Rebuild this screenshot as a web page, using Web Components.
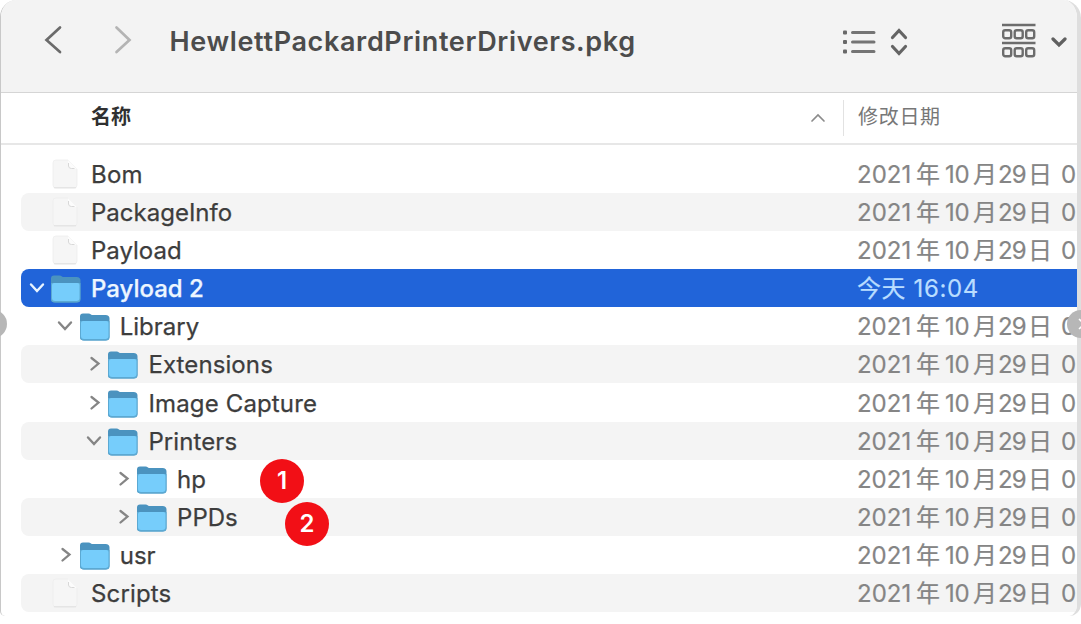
<!DOCTYPE html>
<html lang="zh-CN"><head><meta charset="utf-8"><title>HewlettPackardPrinterDrivers.pkg</title>
<style>html,body{margin:0;width:1081px;height:624px;overflow:hidden;background:#fff}</style></head>
<body><finder-window></finder-window>
<script>
const define=(name,render)=>customElements.define(name,class extends HTMLElement{
  connectedCallback(){ if(!this.shadowRoot) this.attachShadow({mode:'open'}).innerHTML=render(this); }
});

define('finder-icon',el=>{
  const arts={
    back:[20,30,'<path d="M16 2.500 2.500 15l13.500 12" fill="none" stroke="#6b6b6b" stroke-width="2.700" stroke-linecap="round"/>'],
    forward:[20,30,'<path d="m3.500 2.500 13 12.500-13 12" fill="none" stroke="#b4b4b4" stroke-width="2.700" stroke-linecap="round"/>'],
    list:[34,26,'<g fill="#686868"><rect y="1.500" width="4" height="4" rx="1"/><rect y="11" width="4" height="4" rx="1"/><rect y="20.500" width="4" height="4" rx="1"/></g><path d="M9.500 3.500h21.500M9.500 13h21.500M9.500 22.500h21.500" stroke="#747474" stroke-width="3" stroke-linecap="round"/>'],
    updown:[18,28,'<path d="m2.500 9.500 6.500-7 6.500 7M2.500 18.500l6.500 7 6.500-7" fill="none" stroke="#646464" stroke-width="3.200" stroke-linecap="round"/>'],
    group:[36,36,'<g fill="none" stroke="#6c6c6c" stroke-width="2.400"><path d="M1 2h33.500M1 20h33.500"/>'+[7.2,25.200].map(y=>[2.200,13.700,25.200].map(x=>`<rect x="${x}" y="${y}" width="8" height="8" rx="2"/>`).join('')).join('')+'</g>'],
    caret:[16,12,'<path d="m2 3 6 6 6-6" fill="none" stroke="#606060" stroke-width="3.200" stroke-linecap="round"/>'],
    sort:[16,10,'<path d="m2 8 6-6 6 6" fill="none" stroke="#8b8b8b" stroke-width="1.700" stroke-linecap="round"/>'],
    open:[16,12,'<path d="m2 2.500 6 6.500 6-6.500" fill="none" stroke="currentColor" stroke-width="2.400" stroke-linecap="round"/>'],
    closed:[12,16,'<path d="m2.500 2 7 5.500-7 6" fill="none" stroke="currentColor" stroke-width="2.300" stroke-linecap="round"/>'],
    folder:[30,28,'<path d="M0 3.500Q0 .5 3 .5h5.500q1.500 0 2.500 1l.8.500H25.500q4 0 4 3.500V24q0 3.500-4 3.500H4q-4 0-4-3.500z" fill="#4b93bf"/><path d="M0 8h29.500v16q0 3.500-4 3.500H4q-4 0-4-3.500z" fill="#5ba9d3"/><path d="M1 10q0-2 2-2h23.500q2 0 2 2v13q0 3-3 3H4q-3 0-3-3z" fill="#76cdfb"/>'],
    file:[26,30,'<path d="M1 4q0-3 3-3h12l9 9v16q0 3-3 3H4q-3 0-3-3z" fill="#f6f6f6" stroke="#ededed" stroke-width=".8"/><path d="M2 28.800h22" stroke="#e0e0e0" stroke-width="1"/><path d="M16 1v6q0 3 3 3h6z" fill="#fcfcfc"/><path d="M16.500 4v3q0 2.500 3 2.500h3" fill="none" stroke="#d8d8d8"/>']
  };
  const [w,h,a]=arts[el.getAttribute('name')];
  return `<style>:host{display:block;width:${w}px;height:${h}px;flex:none}svg{display:block}</style><svg width="${w}" height="${h}" viewBox="0 0 ${w} ${h}">${a}</svg>`;
});

define('finder-toolbar',()=>`<style>
:host{display:flex;align-items:center;height:93px;box-sizing:border-box;padding:0 10px 9px 43px;background:#f3f3f3;border-bottom:1px solid #d5d5d5}
.back{margin-bottom:3px}.f{margin:0 0 3px 49px}.t{font:600 27px/34px Inter,sans-serif;color:#4c4c4c;margin-left:36.500px;white-space:nowrap;flex:1;letter-spacing:.64px;padding-top:1px}
.u{margin-left:13px}.g{margin:0 0 2px 93px}.c{margin-left:14px}
</style><finder-icon class="back" name="back"></finder-icon><finder-icon class="f" name="forward"></finder-icon><div class="t"><slot></slot></div>
<finder-icon name="list"></finder-icon><finder-icon class="u" name="updown"></finder-icon><finder-icon class="g" name="group"></finder-icon><finder-icon class="c" name="caret"></finder-icon>`);

define('column-header',()=>`<style>
:host{display:flex;align-items:center;height:52px;box-sizing:border-box;border-bottom:2px solid #e7e7e7;padding-left:90px;font:20px/28px Inter,"Noto Sans CJK SC",sans-serif;color:#777}
.n{width:719px;font-weight:700;color:#303030}.d{width:1px;height:36px;background:#e2e2e2;margin:0 14px 0 17px}.m{letter-spacing:.7px}
.n,.m{padding-bottom:2px}
</style><span class="n">名称</span><finder-icon name="sort"></finder-icon><i class="d"></i><span class="m">修改日期</span>`);

define('date-label',el=>`<style>
:host{display:flex;align-items:center;font:24px/38px Inter,"Noto Sans CJK SC",sans-serif;white-space:nowrap;padding-top:2px}
span{flex:none}.a{width:59px;letter-spacing:0}.b{width:29px}.c{width:28px;letter-spacing:-.3px}.d{width:25px}.e{width:30px;letter-spacing:-.9px}.f{width:33px}.today{letter-spacing:.6px}
</style>${el.hasAttribute('today')?'<span class="today">今天 16:04</span>':'<span class="a">2021</span><span class="b">年</span><span class="c">10</span><span class="d">月</span><span class="e">29</span><span class="f">日</span><span>0</span>'}`);

define('file-row',el=>{
  const lv=+el.getAttribute('level')||0, st=el.getAttribute('state'), sel=el.hasAttribute('selected');
  return `<style>
:host{display:flex;align-items:center;height:38.1px;margin-left:20px;box-sizing:border-box;border-radius:8px 0 0 8px;color:#3d3d3d;overflow:hidden;background:${sel?'#2164d9':el.hasAttribute('striped')?'#f4f4f4':'transparent'}}
.name{display:flex;align-items:center;width:${836-lv*28.7}px;padding-left:${lv*28.7}px;flex:none}
.arrow{width:30px;display:flex;justify-content:center;color:${sel?'#e9f4ff':'#858585'};padding-left:${st==='closed'?3:1}px;box-sizing:border-box}
.icon{width:40px;display:flex;box-sizing:border-box;padding:${st?'2px 0 0 0':'0 0 0 1px'}}
.t{font:${sel?500:400} 24px/38px Inter,sans-serif;color:${sel?'#edf6ff':'#3d3d3d'};white-space:nowrap;padding-top:2px;letter-spacing:${el.getAttribute('track')||0}px;-webkit-text-stroke:.25px currentColor}
date-label{color:${sel?'#b9ddff':'#858585'};-webkit-text-stroke:.2px currentColor}
</style><div class="name"><div class="arrow">${st?`<finder-icon name="${st}"></finder-icon>`:''}</div><div class="icon"><finder-icon name="${st?'folder':'file'}"></finder-icon></div><span class="t"><slot></slot></span></div><date-label ${sel?'today':''}></date-label>`;
});

define('number-badge',()=>`<style>:host{position:absolute;display:flex;align-items:center;justify-content:center;width:44px;height:44px;border-radius:50%;background:#f20f16;color:#fff;font:600 24px/44px Inter,sans-serif}</style><slot></slot>`);

define('carousel-button',()=>`<style>:host{position:absolute;width:28px;height:28px;border-radius:50%;background:#b7b7b7;display:block}svg{display:block}</style><svg width="28" height="28"><path d="m12 9 5.500 5L12 19" fill="none" stroke="#fff" stroke-width="1.600"/></svg>`);

define('finder-window',()=>`<style>
:host{display:block;position:relative;width:1081px;height:624px;overflow:hidden;background:#fff}
.frame{box-sizing:border-box;width:1081px;height:616px;border-left:1px solid #c8c8c8;border-right:4px solid #dedede;border-radius:17px 18px 12px 5px;overflow:hidden}
.rows{padding-top:9.900px}
.one{left:260px;top:459px}.two{left:285px;top:502px}.left{left:-21px;top:310px;transform:scaleX(-1)}.right{left:1067px;top:310px}
</style><div class="frame"><finder-toolbar>HewlettPackardPrinterDrivers.pkg</finder-toolbar><column-header></column-header><div class="rows">
<file-row track=".2">Bom</file-row><file-row striped>PackageInfo</file-row><file-row>Payload</file-row>
<file-row selected state="open">Payload 2</file-row><file-row level="1" state="open">Library</file-row>
<file-row level="2" state="closed" striped track=".1">Extensions</file-row><file-row level="2" state="closed" track=".15">Image Capture</file-row>
<file-row level="2" state="open" striped track=".1">Printers</file-row><file-row level="3" state="closed">hp</file-row>
<file-row level="3" state="closed" striped>PPDs</file-row><file-row level="1" state="closed">usr</file-row><file-row striped track=".15">Scripts</file-row>
</div></div><number-badge class="one">1</number-badge><number-badge class="two">2</number-badge><carousel-button class="left"></carousel-button><carousel-button class="right"></carousel-button>`);
</script></body></html>
